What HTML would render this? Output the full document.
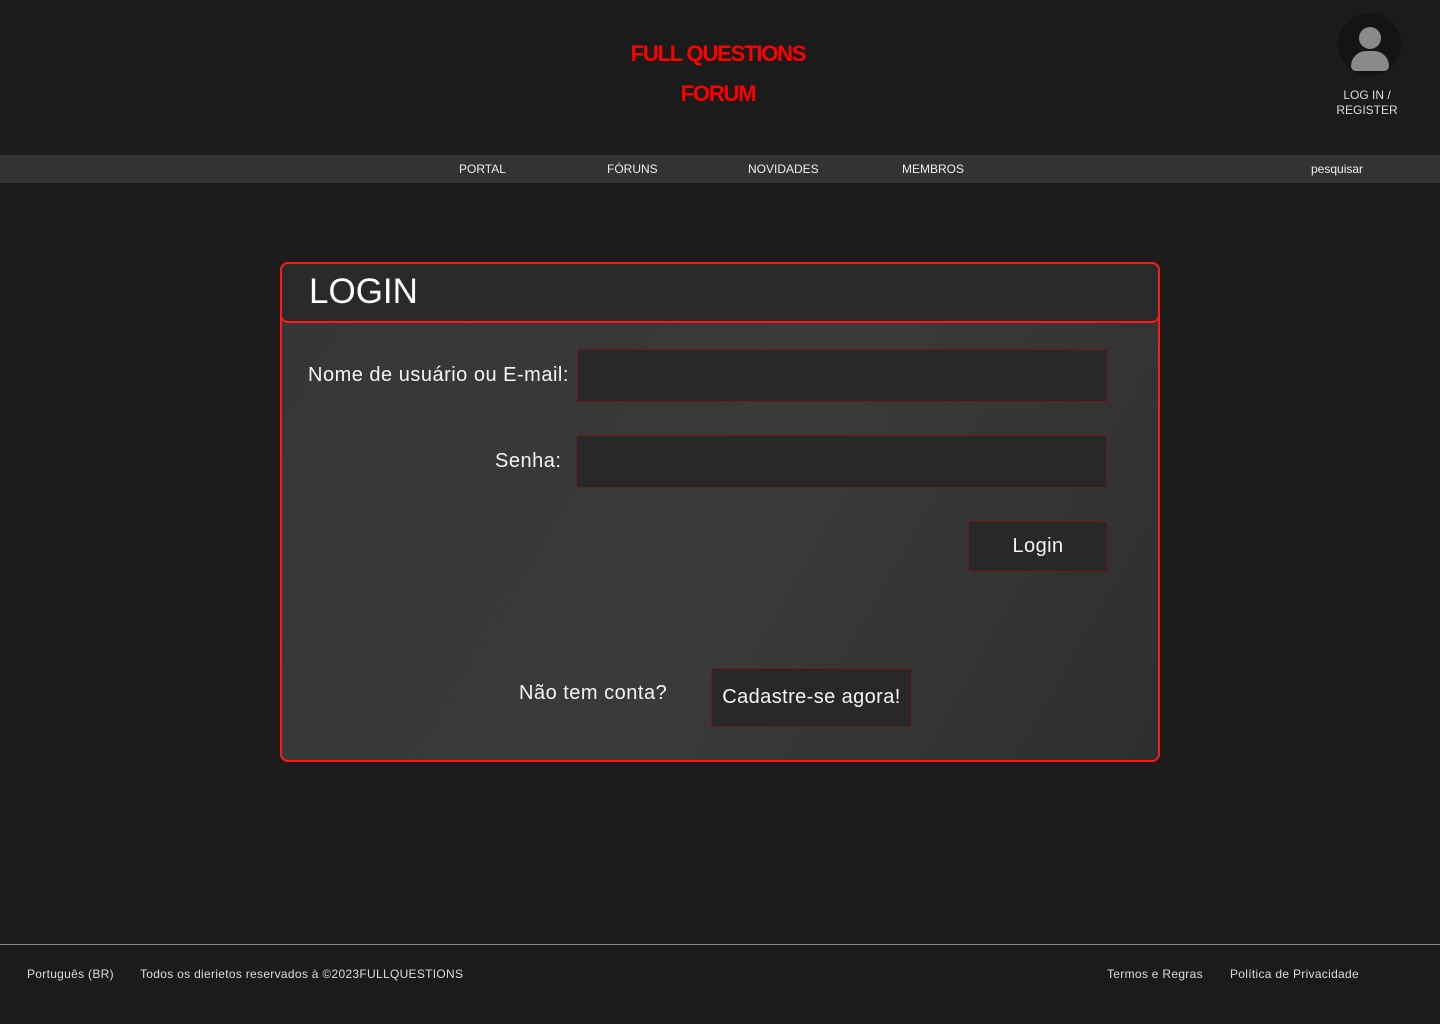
<!DOCTYPE html>
<html><head><meta charset="utf-8"><style>
*{margin:0;padding:0;box-sizing:border-box}
body{width:1440px;height:1024px;background:#1b1b1b;font-family:"Liberation Sans",sans-serif;color:#fff;position:relative;overflow:hidden}
.abs{position:absolute}
.logo{color:#ff0000;font-weight:bold;font-size:22px;letter-spacing:-1.2px;text-align:center;width:300px;left:568px}
.nav{left:0;top:155px;width:1440px;height:28px;background:#333}
.nav span{position:absolute;top:7px;font-size:12px;color:#eee}
.card{left:280px;top:262px;width:880px;height:500px;border:2px solid #ff1a1a;border-radius:8px;background:linear-gradient(120deg,#363636 0%,#3a3a3a 55%,#2e2e2e 100%);overflow:hidden}
.head{left:-2px;top:-2px;width:880px;height:61px;background:#2a2a2a;border:2px solid #ff1a1a;border-radius:8px}
.inp{background:#282828;border:1px solid #6a1c1c}
.lbl{font-size:20px;color:#f4f4f4;letter-spacing:0.5px}
.btn{background:#282828;border:1px solid #6a1c1c;font-size:20px;color:#f4f4f4;display:flex;align-items:center;justify-content:center;letter-spacing:0.4px}
.f{font-size:12px;color:#ddd;top:967px;letter-spacing:0.3px}
</style></head><body>
<div class="abs logo" style="top:41px">FULL QUESTIONS</div>
<div class="abs logo" style="top:81px">FORUM</div>
<div class="abs" style="left:1338px;top:13px;width:63px;height:63px;border-radius:50%;background:#141414"></div>
<div class="abs" style="left:1359px;top:27px;width:22px;height:22px;border-radius:50%;background:#8a8a8a"></div>
<div class="abs" style="left:1351px;top:51px;width:38px;height:20px;border-radius:19px 19px 6px 6px;background:#8a8a8a"></div>
<div class="abs" style="left:1327px;top:88px;width:80px;text-align:center;font-size:12px;line-height:15px;color:#ddd">LOG IN /<br>REGISTER</div>
<div class="abs nav">
<span style="left:459px">PORTAL</span>
<span style="left:607px">FÓRUNS</span>
<span style="left:748px">NOVIDADES</span>
<span style="left:902px">MEMBROS</span>
<span style="left:1311px">pesquisar</span>
</div>
<div class="abs card">
<div class="abs head"><div class="abs" style="left:27px;top:8px;font-size:35px;color:#fff">LOGIN</div></div>
<div class="abs lbl" style="left:26px;top:100px">Nome de usuário ou E-mail:</div>
<div class="abs inp" style="left:295px;top:85px;width:531px;height:53px"></div>
<div class="abs lbl" style="left:213px;top:186px">Senha:</div>
<div class="abs inp" style="left:294px;top:171px;width:531px;height:53px"></div>
<div class="abs btn" style="left:686px;top:257px;width:140px;height:51px">Login</div>
<div class="abs lbl" style="left:237px;top:418px">Não tem conta?</div>
<div class="abs btn" style="left:429px;top:404px;width:201px;height:59px">Cadastre-se agora!</div>
</div>
<div class="abs" style="left:0;top:944px;width:1440px;height:1px;background:#8a8a8a"></div>
<div class="abs f" style="left:27px">Português (BR)</div>
<div class="abs f" style="left:140px">Todos os dierietos reservados à ©2023FULLQUESTIONS</div>
<div class="abs f" style="left:1107px">Termos e Regras</div>
<div class="abs f" style="left:1230px">Política de Privacidade</div>
</body></html>
